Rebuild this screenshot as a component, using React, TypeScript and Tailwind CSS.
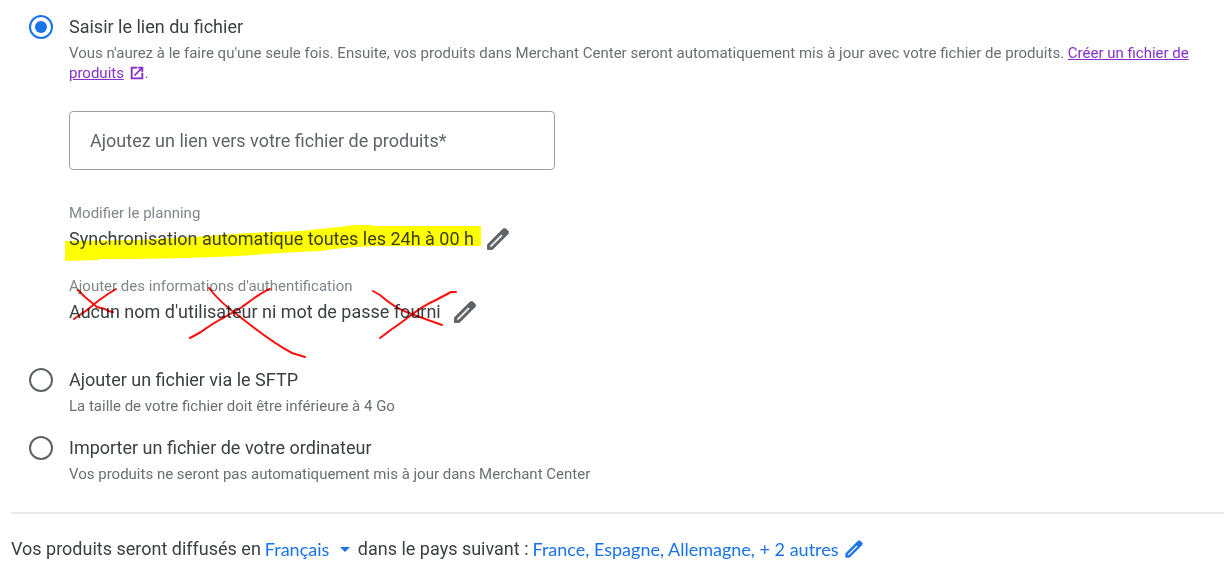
import { useState } from 'react';

type IconProps = { className?: string };

function PencilIcon({ className }: IconProps) {
  return (
    <svg
      viewBox="0 0 24 24"
      fill="currentColor"
      stroke="currentColor"
      strokeWidth="0.8"
      strokeLinejoin="round"
      className={className}
      aria-hidden="true"
    >
      <path d="M20.41 4.94l-1.35-1.35c-.78-.78-2.05-.78-2.83 0L13.4 6.41 3 16.82V21h4.18l10.46-10.46 2.77-2.77c.79-.78.79-2.05 0-2.83zm-14 14.12L5 19v-1.36l9.82-9.82 1.41 1.41-9.82 9.83z" />
    </svg>
  );
}

function OpenInNewIcon({ className }: IconProps) {
  return (
    <svg
      viewBox="0 0 24 24"
      fill="currentColor"
      stroke="currentColor"
      strokeWidth="0.8"
      className={className}
      aria-hidden="true"
    >
      <path d="M19 19H5V5h7V3H3v18h18v-9h-2v7zM14 3v2h3.59l-9.83 9.83 1.41 1.41L19 6.41V10h2V3h-7z" />
    </svg>
  );
}

// Hand-drawn marks laid over the schedule and authentication rows
function Annotations() {
  return (
    <svg
      viewBox="0 0 430 160"
      className="pointer-events-none absolute -left-1 top-0 h-[160px] w-[430px] mix-blend-multiply"
      aria-hidden="true"
    >
      <path
        d="M0 38L70 37L128 34L155 32L185 30L235 28L255 26L275 24L290 22L307 22L308 23L416 23L416 43L312 43L290 44L270 46L255 48L235 49L200 51L175 53L150 54L122 55L70 56L34 56L34 57L0 58Z"
        fill="#ffff00"
      />
      <g fill="none" stroke="#ff1010" strokeWidth="2" strokeLinecap="round" strokeLinejoin="round">
        <path d="M13 87L20 94L32 104L40 106L43 108L48 109" />
        <path d="M9 116L22 107L33 98L43 91L51 86" />
        <path d="M144 85C154 98 164 106 174 113C194 129 214 143 227 150L240 154" />
        <path d="M125 135L136 129C151 117 165 112 177 104C188 96 198 88 205 86" />
        <path d="M308 88L315 92C331 106 341 109 352 113L377 122" />
        <path d="M315 135L327 126C343 116 352 105 371 97L386 89L391 89" />
      </g>
    </svg>
  );
}

const uploadOptions = [
  {
    id: 'sftp',
    title: 'Ajouter un fichier via le SFTP',
    description: 'La taille de votre fichier doit être inférieure à 4 Go',
  },
  {
    id: 'computer',
    title: 'Importer un fichier de votre ordinateur',
    description: 'Vos produits ne seront pas automatiquement mis à jour dans Merchant Center',
  },
];

const settings = [
  {
    label: 'Modifier le planning',
    value: 'Synchronisation automatique toutes les 24h à 00 h',
  },
  {
    label: "Ajouter des informations d'authentification",
    value: "Aucun nom d'utilisateur ni mot de passe fourni",
  },
];

const radioClass =
  'size-6 shrink-0 appearance-none rounded-full border-2 border-[#5f6368] bg-clip-content p-1 checked:border-[#1a73e8] checked:bg-[#1a73e8]';

export default function App() {
  const [method, setMethod] = useState('link');

  return (
    <main className="bg-white pt-[15px] pb-2 font-[Roboto,sans-serif] text-[18px] leading-6 text-[#3c4043]">
      <div className="pl-[29px]">
        <div className="flex gap-4">
          <input
            id="link"
            type="radio"
            name="method"
            className={radioClass}
            checked={method === 'link'}
            onChange={() => setMethod('link')}
          />
          <div className="min-w-0 flex-1">
            <label htmlFor="link" className="block">Saisir le lien du fichier</label>
            <p className="mt-1 text-[15px] leading-5 text-[#6b6f73]">
              Vous n'aurez à le faire qu'une seule fois. Ensuite, vos produits dans Merchant Center seront
              automatiquement mis à jour avec votre fichier de produits.{' '}
              <a href="#" className="text-[#8430ce] underline">Créer un fichier de produits</a>{' '}
              <OpenInNewIcon className="ml-px inline size-4 align-[-3px] text-[#8430ce]" />.
            </p>

            <input
              type="url"
              aria-label="Ajoutez un lien vers votre fichier de produits"
              placeholder="Ajoutez un lien vers votre fichier de produits*"
              className="mt-7 block h-[59px] w-full max-w-[486px] rounded border border-[#9aa0a6] px-5 placeholder:text-[#5f6368]"
            />

            <div className="relative mt-[33px] flex flex-col gap-[25px]">
              {settings.map((setting) => (
                <div key={setting.label}>
                  <div className="text-[15px] leading-5 text-[#80868b]">{setting.label}</div>
                  <div className="mt-1 flex h-6 items-center gap-[10px]">
                    <span>{setting.value}</span>
                    <button type="button" aria-label={setting.label} className="text-[#5f6368]">
                      <PencilIcon className="size-7" />
                    </button>
                  </div>
                </div>
              ))}
              <Annotations />
            </div>
          </div>
        </div>

        <div className="mt-11 flex flex-col gap-5">
          {uploadOptions.map((option) => (
            <div key={option.id} className="flex gap-4">
              <input
                id={option.id}
                type="radio"
                name="method"
                className={radioClass}
                checked={method === option.id}
                onChange={() => setMethod(option.id)}
              />
              <div>
                <label htmlFor={option.id} className="block">{option.title}</label>
                <p className="mt-1 text-[15px] leading-5 text-[#6b6f73]">{option.description}</p>
              </div>
            </div>
          ))}
        </div>
      </div>

      <div className="mt-7 ml-[11px] border-t-2 border-[#e8eaed] pt-[23px]">
        <div className="flex items-center">
          <label htmlFor="language">Vos produits seront diffusés en</label>
          <span className="relative ml-1 flex items-center text-[#1a73e8]">
            <select id="language" className="appearance-none pr-7 font-[Lato,sans-serif]">
              <option>Français</option>
            </select>
            <svg viewBox="0 0 10 5" className="pointer-events-none absolute right-2 h-[5px] w-[10px]" aria-hidden="true">
              <path d="M0 0h10L5 5z" fill="currentColor" />
            </svg>
          </span>
          <span>dans le pays suivant :</span>
          <button type="button" className="ml-1 flex items-center gap-1 font-[Lato,sans-serif] text-[#1a73e8]">
            France, Espagne, Allemagne, + 2 autres
            <PencilIcon className="size-[22px]" />
          </button>
        </div>
      </div>
    </main>
  );
}
